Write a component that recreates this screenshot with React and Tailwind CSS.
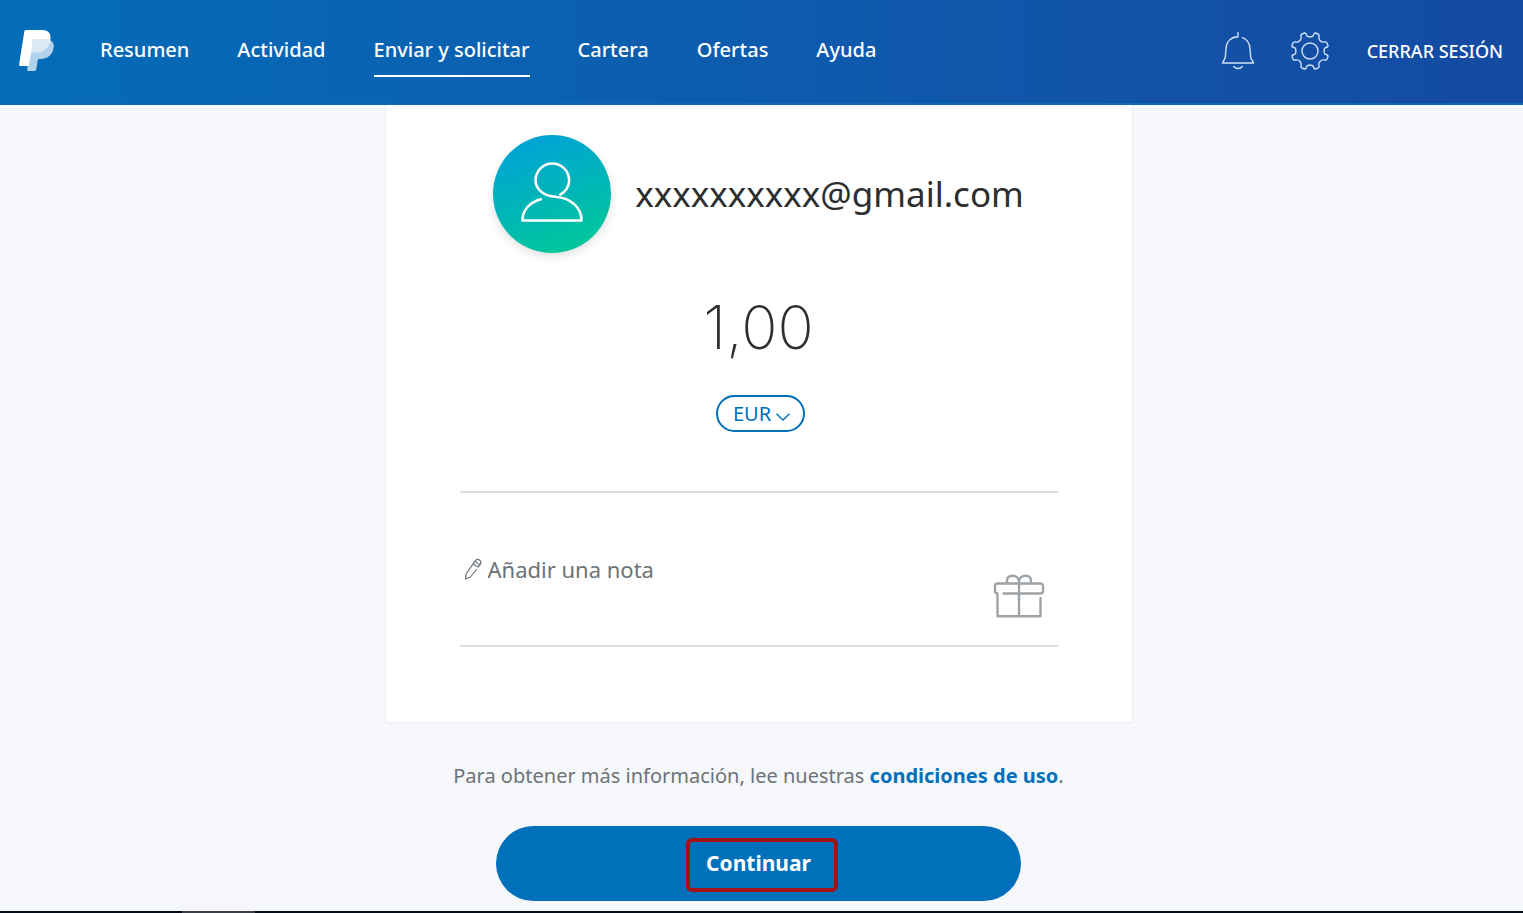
import { useState } from "react";
import clsx from "clsx";

const NAV_ITEMS = [
  { label: "Resumen", href: "#resumen" },
  { label: "Actividad", href: "#actividad" },
  { label: "Enviar y solicitar", href: "#enviar", active: true },
  { label: "Cartera", href: "#cartera" },
  { label: "Ofertas", href: "#ofertas" },
  { label: "Ayuda", href: "#ayuda" },
];

const CURRENCIES = ["EUR", "USD", "GBP"];

// ─── Icons ────────────────────────────────────────────────────────────────────

function PayPalLogo() {
  return (
    <svg width="36" height="42" viewBox="0 0 36 42" aria-hidden="true">
      <path
        fill="#b3d3ec"
        d="M13.200 10h17.800c3.200 1.800 4.400 4.400 3.600 8-1.300 7.400-6.600 11-13.200 11h-1.200c-.8 0-1.400.5-1.500 1.300l-1.500 9.200c-.1.900-.8 1.500-1.600 1.500H9.300c-.8 0-1.300-.6-1.200-1.400z"
      />
      <path
        fill="#fff"
        d="M7 0h16.500c6 0 9 3.800 7.800 10-1.400 8.200-6.600 12-13.800 12h-3.700c-.9 0-1.600.6-1.700 1.500L9.700 36H1.300c-.8 0-1.300-.6-1.200-1.400L5.300 1.500C5.400.6 6.100 0 7 0z"
      />
      <path
        fill="#dce9f3"
        d="M14 9h15.600l1.700.800c-1.400 8.400-6.600 12.800-13.900 12.800h-3.700c-.7 0-1.300.4-1.600 1l1.400-13.300c.1-.7.200-1 .5-1.300z"
      />
    </svg>
  );
}

function BellIcon() {
  return (
    <svg
      width="34"
      height="40"
      viewBox="0 0 34 40"
      fill="none"
      stroke="currentColor"
      strokeWidth="1.400"
      strokeLinecap="round"
      strokeLinejoin="round"
      aria-hidden="true"
    >
      <path d="M17 1.500V5.800C9.500 6.200 5.200 11 4.900 18l-.4 6.500c-.2 2.500-.6 3.800-1.800 5.200-.8.900-1.200 1.400-1.200 2.300h31c0-.9-.4-1.400-1.200-2.300-1.200-1.400-1.600-2.700-1.800-5.200l-.4-6.500c-.3-5.500-3.300-9.800-7.600-11.400" />
      <path d="M12.700 35.500c2.300 2.600 6.300 2.600 8.600 0" />
    </svg>
  );
}

// Two teeth; four of these turned by 90° close the ring
const GEAR_QUARTER =
  "M0-14.200H1.500Q3-14.200 3.500-16 4-18.300 5.500-18L8-17Q9.500-16.300 9-14.500 8.400-12 10.200-10.200 12-8.400 14.500-9 16.300-9.500 17-8L18-5.500Q18.300-4 16-3.500 14.200-3 14.200-1.500V0";

function GearIcon() {
  return (
    <svg
      width="38"
      height="38"
      viewBox="-19 -19 38 38"
      fill="none"
      stroke="currentColor"
      strokeWidth="1.400"
      strokeLinejoin="round"
      aria-hidden="true"
    >
      <circle r="8" />
      {[0, 90, 180, 270].map((angle) => (
        <path key={angle} d={GEAR_QUARTER} transform={`rotate(${angle})`} />
      ))}
    </svg>
  );
}

function PersonIcon() {
  return (
    <svg
      width="62"
      height="60"
      viewBox="0 0 64 62"
      fill="none"
      stroke="#fff"
      strokeWidth="2.600"
      strokeLinecap="round"
      strokeLinejoin="round"
      className="mb-1"
      aria-hidden="true"
    >
      <path d="M20.500 38.500C9 41.500 1.500 49.500 1.500 60.500h61C62.500 47 52 37.500 35.500 36 24.500 35 15 29 15 19.200 15 9.500 22.800 1.500 32.300 1.500S49.700 9.300 49.700 19.200c0 6-3.500 11.300-9.200 14.600" />
    </svg>
  );
}

function PencilIcon() {
  return (
    <svg
      width="18"
      height="22"
      viewBox="0 0 18 22"
      fill="none"
      stroke="currentColor"
      strokeWidth="1.200"
      strokeLinecap="round"
      strokeLinejoin="round"
      aria-hidden="true"
    >
      <path d="M12.500 11.500 6.500 19 1.500 21l.8-5.500L11 3.200c1.200-1.700 2.700-2.600 4.500-1.300s1.800 2.800.6 4.500L14.500 8.700" />
      <path d="M11.300 3c1 1.800 2.700 3 4.700 3.300M9.500 5.600c1 1.600 2.800 2.900 4.900 3.200" />
    </svg>
  );
}

function GiftIcon() {
  return (
    <svg
      width="52"
      height="46"
      viewBox="0 0 52 46"
      fill="none"
      stroke="currentColor"
      strokeWidth="2.400"
      strokeLinecap="round"
      strokeLinejoin="round"
      aria-hidden="true"
    >
      <path d="M10.500 20.500h37c1.700 0 2.500-.8 2.500-2.500v-5c0-1.700-.8-2.500-2.500-2.500h-43C2.800 10.500 2 11.300 2 13v5c0 1.500.8 2.500 2.500 2.500v22.800H47.500V25" />
      <path d="M26 43V10.500" />
      <path d="M14.200 9.500C13.200 5.500 15.600 2.700 19.500 2.700c3.800 0 6.500 2.500 6.500 6.300 0-3.800 2.700-6.300 6.500-6.300 3.900 0 6.300 2.800 5.300 6.800" />
    </svg>
  );
}

// ─── Header ───────────────────────────────────────────────────────────────────

function Header() {
  return (
    <header className="flex h-[105px] items-start justify-between border-b-2 border-[#0e67b3] bg-linear-to-r from-[#036cb8] to-[#144aa2] pr-5 pl-[19px] text-white">
      <div className="flex items-start">
        <a href="#inicio" aria-label="PayPal" className="mt-[30px] mr-[45px]">
          <PayPalLogo />
        </a>
        <nav className="mt-[34px] flex gap-12 text-xl leading-8 font-medium">
          {NAV_ITEMS.map((item) => (
            <a
              key={item.label}
              href={item.href}
              aria-current={item.active ? "page" : undefined}
              className={clsx(
                "border-b-2 pb-[9px]",
                item.active ? "border-white" : "border-transparent",
              )}
            >
              {item.label}
            </a>
          ))}
        </nav>
      </div>

      <div className="mt-[31px] flex items-center">
        <button aria-label="Notificaciones" className="mr-9 text-[#cfe0f5]">
          <BellIcon />
        </button>
        <button aria-label="Configuración" className="mr-[38px] text-[#cfe0f5]">
          <GearIcon />
        </button>
        <a href="#salir" className="text-lg font-medium">
          CERRAR SESIÓN
        </a>
      </div>
    </header>
  );
}

// ─── Payment card ─────────────────────────────────────────────────────────────

function PaymentCard() {
  const [amount, setAmount] = useState("1,00");
  const [currency, setCurrency] = useState("EUR");
  const [note, setNote] = useState("");

  return (
    <section className="w-full max-w-[748px] border border-t-0 border-[#ebedf0] bg-white px-[74px] pt-[30px] pb-[75px]">
      <div className="flex items-center justify-center gap-6">
        <div className="flex size-[118px] shrink-0 items-center justify-center rounded-full bg-linear-[160deg] from-[#009fdd] to-[#00cb93] shadow-[0_4px_10px_rgba(0,0,0,0.12)]">
          <PersonIcon />
        </div>
        <h1 className="text-[35px] text-[#2c2e2f]">xxxxxxxxxx@gmail.com</h1>
      </div>

      <div className="flex flex-col items-center">
        <input
          aria-label="Importe"
          value={amount}
          onChange={(e) => setAmount(e.target.value)}
          className="mt-[34px] h-20 w-full text-center font-['Inter',sans-serif] text-[60px] font-extralight text-[#2c2e2f] outline-none"
        />
        <div className="relative mt-7 ml-1">
          <select
            aria-label="Divisa"
            value={currency}
            onChange={(e) => setCurrency(e.target.value)}
            className="h-[37px] w-[89px] appearance-none rounded-full border-2 border-[#0070ba] bg-white pl-[15px] text-xl leading-6 text-[#0070ba]"
          >
            {CURRENCIES.map((code) => (
              <option key={code}>{code}</option>
            ))}
          </select>
          <svg
            width="14"
            height="8"
            viewBox="0 0 14 8"
            fill="none"
            stroke="#0070ba"
            strokeWidth="1.400"
            className="pointer-events-none absolute top-[18px] right-[15px]"
            aria-hidden="true"
          >
            <path d="M.5.800 7 7 13.500.800" />
          </svg>
        </div>
      </div>

      <div className="mt-[59px] flex justify-between border-y-2 border-[#dcdddf] pt-[60px] pr-[13px] pb-[26px] pl-1">
        <label className="flex flex-1 items-start gap-[6px] text-[#6c7378]">
          <span className="pt-[5px]">
            <PencilIcon />
          </span>
          <textarea
            aria-label="Añadir una nota"
            rows={1}
            value={note}
            onChange={(e) => setNote(e.target.value)}
            placeholder="Añadir una nota"
            className="h-8 flex-1 resize-none overflow-hidden text-[22px] leading-8 placeholder-[#6c7378] outline-none"
          />
        </label>
        <button aria-label="Añadir un regalo" className="mt-5 text-[#9da3a6]">
          <GiftIcon />
        </button>
      </div>
    </section>
  );
}

export default function App() {
  return (
    <div className="flex min-h-screen flex-col bg-[#f5f7fa] font-['Noto_Sans',sans-serif]">
      <Header />
      <main className="flex flex-col items-center pr-[6px]">
        <PaymentCard />
        <p className="mt-[37px] text-xl leading-8 text-[#6c7378]">
          Para obtener más información, lee nuestras{" "}
          <a href="#condiciones" className="font-bold text-[#0070ba]">
            condiciones de uso
          </a>
          .
        </p>
        <button className="relative mt-[34px] mb-[10px] h-[75px] w-full max-w-[525px] rounded-full bg-[#0070ba] text-[21px] font-bold text-white">
          Continuar
          <span className="absolute top-3 right-0 left-[7px] mx-auto h-[54px] w-[152px] rounded-md border-4 border-[#a31217]" />
        </button>
      </main>
      <div className="mt-auto h-[2px] bg-[#050b18]">
        <div className="ml-[182px] h-full w-[73px] bg-[#3b3f47]" />
      </div>
    </div>
  );
}
